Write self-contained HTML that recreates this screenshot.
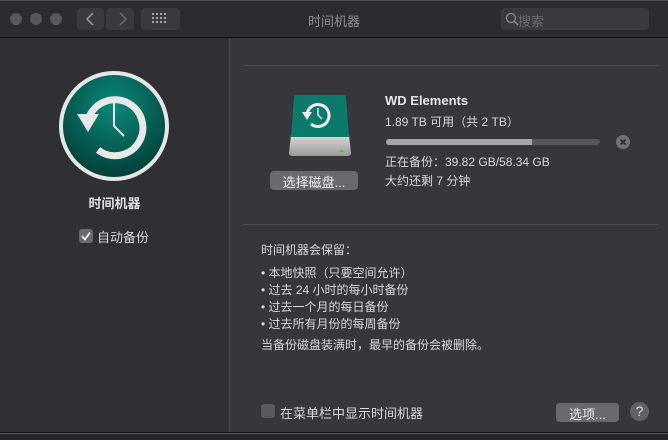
<!DOCTYPE html>
<html><head><meta charset="utf-8"><style>
*{margin:0;padding:0;box-sizing:border-box}
body{width:668px;height:440px;overflow:hidden;background:#2a292e;font-family:"Liberation Sans","Noto Sans CJK SC",sans-serif;position:relative;color:#dcdcdc}
.a{position:absolute}
.t{font-size:12px;color:#d8d8d8;white-space:nowrap}
</style></head><body>
<div class="a" style="left:0;top:0;width:668px;height:37px;background:#2c2b30;border-top:1px solid #4a4950"></div>
<div class="a" style="left:10px;top:13px;width:12px;height:12px;border-radius:50%;background:#58575c"></div>
<div class="a" style="left:30px;top:13px;width:12px;height:12px;border-radius:50%;background:#58575c"></div>
<div class="a" style="left:50px;top:13px;width:12px;height:12px;border-radius:50%;background:#58575c"></div>
<div class="a" style="left:77px;top:8px;width:27px;height:22px;border-radius:4px;background:#3a393e"></div>
<div class="a" style="left:106px;top:8px;width:28px;height:22px;border-radius:4px;background:#3a393e"></div>
<svg class="a" style="left:77px;top:8px" width="57" height="22"><path d="M16 5 L10 11 L16 17" stroke="#9a999e" stroke-width="1.5" fill="none"/><path d="M43 5 L49 11 L43 17" stroke="#6a696e" stroke-width="1.5" fill="none"/></svg>
<div class="a" style="left:141px;top:8px;width:39px;height:22px;border-radius:4px;background:#3a393e"></div>
<svg class="a" style="left:152px;top:13px" width="17" height="12"><g fill="#a5a4a9"><rect x="0" y="0" width="2" height="2"/><rect x="4" y="0" width="2" height="2"/><rect x="8" y="0" width="2" height="2"/><rect x="12" y="0" width="2" height="2"/><rect x="0" y="4" width="2" height="2"/><rect x="4" y="4" width="2" height="2"/><rect x="8" y="4" width="2" height="2"/><rect x="12" y="4" width="2" height="2"/><rect x="0" y="8" width="2" height="2"/><rect x="4" y="8" width="2" height="2"/><rect x="8" y="8" width="2" height="2"/><rect x="12" y="8" width="2" height="2"/></g></svg>
<div class="a t" style="left:0;width:668px;top:11px;text-align:center;font-size:13px;color:#8f8e93">时间机器</div>
<div class="a" style="left:501px;top:8px;width:148px;height:22px;border-radius:4px;background:#3a393e"></div>
<svg class="a" style="left:505px;top:12px" width="14" height="14"><circle cx="6" cy="6" r="4.5" stroke="#8a898e" stroke-width="1.3" fill="none"/><path d="M9.3 9.3 L13 13" stroke="#8a898e" stroke-width="1.5"/></svg>
<div class="a t" style="left:518px;top:11px;font-size:13px;color:#6d6c71">搜索</div>
<div class="a" style="left:0;top:37px;width:668px;height:1px;background:#111"></div>
<div class="a" style="left:0;top:38px;width:229px;height:394px;background:#302f34"></div>
<div class="a" style="left:229px;top:38px;width:1px;height:394px;background:#4a4950"></div>
<div class="a" style="left:230px;top:38px;width:438px;height:394px;background:#37363b"></div>
<div class="a" style="left:0;top:432px;width:668px;height:1px;background:#111"></div>
<div class="a" style="left:0;top:433px;width:668px;height:1px;background:#5a595e"></div>
<div class="a" style="left:0;top:434px;width:668px;height:6px;background:#26252a"></div>
<svg class="a" style="left:58px;top:70px" width="112" height="112" viewBox="0 0 112 112">
<defs><radialGradient id="g" cx="50%" cy="30%" r="70%"><stop offset="0" stop-color="#0b8a7b"/><stop offset="1" stop-color="#033f38"/></radialGradient></defs>
<circle cx="56" cy="56" r="55" fill="#e6e6e6"/>
<circle cx="56" cy="56" r="51" fill="url(#g)"/>
<path d="M30 50 A28 28 0 1 1 40 80" stroke="#e8e8e8" stroke-width="7" fill="none"/>
<path d="M19 44 L41 44 L30 62 Z" fill="#e8e8e8"/>
<path d="M56 30 L56 56 L66 66" stroke="#e8e8e8" stroke-width="2" fill="none"/>
</svg>
<div class="a t" style="left:0;width:229px;top:193px;text-align:center;font-weight:bold;font-size:13px;color:#e0e0e0">时间机器</div>
<div class="a" style="left:79px;top:229px;width:14px;height:14px;border-radius:3px;background:#6a696e"></div>
<svg class="a" style="left:79px;top:229px" width="14" height="14"><path d="M3 7 L6 10.5 L11 3.5" stroke="#fff" stroke-width="1.6" fill="none"/></svg>
<div class="a t" style="left:97px;top:227px;font-size:13px">自动备份</div>
<div class="a" style="left:243px;top:65px;width:415px;height:1px;background:#4d4c52"></div>
<div class="a" style="left:243px;top:224px;width:415px;height:1px;background:#4d4c52"></div>
<svg class="a" style="left:287px;top:95px" width="66" height="62" viewBox="0 0 66 62">
<defs><linearGradient id="h" x1="0" y1="0" x2="0" y2="1"><stop offset="0" stop-color="#d8d8d8"/><stop offset="1" stop-color="#9a9a9a"/></linearGradient></defs>
<path d="M4 40 L62 40 L64 58 Q64 61 60 61 L6 61 Q2 61 2 58 Z" fill="url(#h)"/>
<path d="M7 2 Q7 0 9 0 L57 0 Q59 0 59 2 L62 42 L4 42 Z" fill="#0b7a6c"/>
<path d="M20 20 A11 11 0 1 1 24 29" stroke="#eee" stroke-width="3" fill="none"/>
<path d="M15 17 L25 17 L20 25 Z" fill="#eee"/>
<path d="M31 13 L31 20 L35 24" stroke="#eee" stroke-width="1.4" fill="none"/>
<rect x="53" y="55" width="3" height="2" fill="#3c3"/>
</svg>
<div class="a" style="left:270px;top:171px;width:88px;height:19px;border-radius:4px;background:#6a696e"></div>
<div class="a t" style="left:270px;width:88px;top:172px;text-align:center;font-size:13px;color:#eee">选择磁盘...</div>
<div class="a t" style="left:385px;top:93px;font-weight:bold;font-size:13px;color:#e6e6e6">WD Elements</div>
<div class="a t" style="left:385px;top:113px">1.89 TB 可用（共 2 TB）</div>
<div class="a" style="left:386px;top:139px;width:214px;height:6px;border-radius:3px;background:#56555a"></div>
<div class="a" style="left:386px;top:139px;width:146px;height:6px;border-radius:3px 0 0 3px;background:#a6a5aa"></div>
<svg class="a" style="left:616px;top:135px" width="14" height="14"><circle cx="7" cy="7" r="7" fill="#717075"/><path d="M4.5 4.5 L9.5 9.5 M9.5 4.5 L4.5 9.5" stroke="#2a292e" stroke-width="1.6"/></svg>
<div class="a t" style="left:385px;top:153px">正在备份：39.82 GB/58.34 GB</div>
<div class="a t" style="left:385px;top:172px">大约还剩 7 分钟</div>
<div class="a t" style="left:261px;top:241px">时间机器会保留：</div>
<div class="a t" style="left:261px;top:264px">• 本地快照（只要空间允许）</div>
<div class="a t" style="left:261px;top:281px">• 过去 24 小时的每小时备份</div>
<div class="a t" style="left:261px;top:298px">• 过去一个月的每日备份</div>
<div class="a t" style="left:261px;top:315px">• 过去所有月份的每周备份</div>
<div class="a t" style="left:261px;top:336px">当备份磁盘装满时，最早的备份会被删除。</div>
<div class="a" style="left:261px;top:404px;width:14px;height:14px;border-radius:3px;background:#5a595e"></div>
<div class="a t" style="left:280px;top:403px;font-size:13px">在菜单栏中显示时间机器</div>
<div class="a" style="left:556px;top:403px;width:63px;height:19px;border-radius:4px;background:#6a696e"></div>
<div class="a t" style="left:556px;width:63px;top:404px;text-align:center;font-size:13px;color:#eee">选项...</div>
<div class="a" style="left:630px;top:402px;width:19px;height:19px;border-radius:50%;background:#626166;text-align:center;font-size:14px;line-height:19px;color:#ddd">?</div>
</body></html>
